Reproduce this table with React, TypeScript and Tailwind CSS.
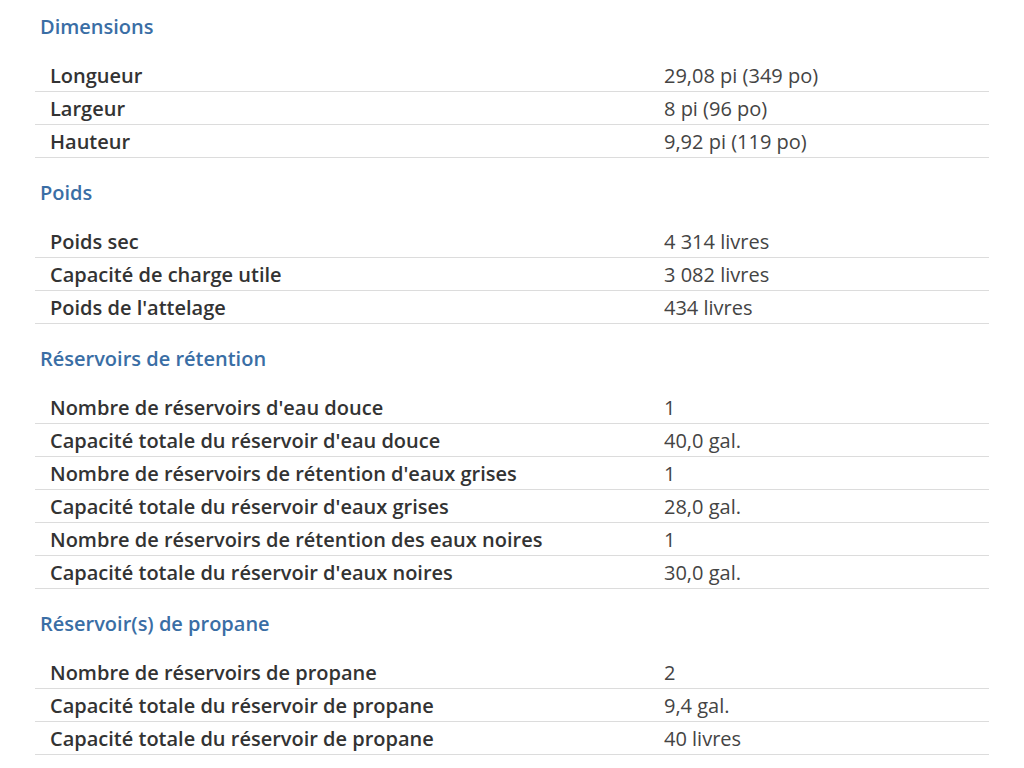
const sections = [
  {
    title: "Dimensions",
    rows: [
      ["Longueur", "29,08 pi (349 po)"],
      ["Largeur", "8 pi (96 po)"],
      ["Hauteur", "9,92 pi (119 po)"],
    ],
  },
  {
    title: "Poids",
    rows: [
      ["Poids sec", "4 314 livres"],
      ["Capacité de charge utile", "3 082 livres"],
      ["Poids de l'attelage", "434 livres"],
    ],
  },
  {
    title: "Réservoirs de rétention",
    rows: [
      ["Nombre de réservoirs d'eau douce", "1"],
      ["Capacité totale du réservoir d'eau douce", "40,0 gal."],
      ["Nombre de réservoirs de rétention d'eaux grises", "1"],
      ["Capacité totale du réservoir d'eaux grises", "28,0 gal."],
      ["Nombre de réservoirs de rétention des eaux noires", "1"],
      ["Capacité totale du réservoir d'eaux noires", "30,0 gal."],
    ],
  },
  {
    title: "Réservoir(s) de propane",
    rows: [
      ["Nombre de réservoirs de propane", "2"],
      ["Capacité totale du réservoir de propane", "9,4 gal."],
      ["Capacité totale du réservoir de propane", "40 livres"],
    ],
  },
];

export default function App() {
  return (
    <div className="min-h-screen bg-white pt-[15px] font-['Open_Sans',sans-serif]">
      {sections.map((section, i) => (
        <section key={section.title} className={i > 0 ? "mt-[23px]" : ""}>
          <h2 className="pl-[40px] text-[20px] font-semibold leading-[24px] text-[#3a6ea5]">
            {section.title}
          </h2>
          <div className="ml-[35px] mt-[20px] w-[954px]">
            {section.rows.map(([label, value], j) => (
              <div
                key={j}
                className="flex h-[33px] items-center border-b border-[#dcdcdc] pt-[1px] leading-[24px]"
              >
                <div className="w-[629px] pl-[15px] text-[20px] font-semibold text-[#333]">
                  {label}
                </div>
                <div className="text-[20px] text-[#444]">{value}</div>
              </div>
            ))}
          </div>
        </section>
      ))}
    </div>
  );
}
